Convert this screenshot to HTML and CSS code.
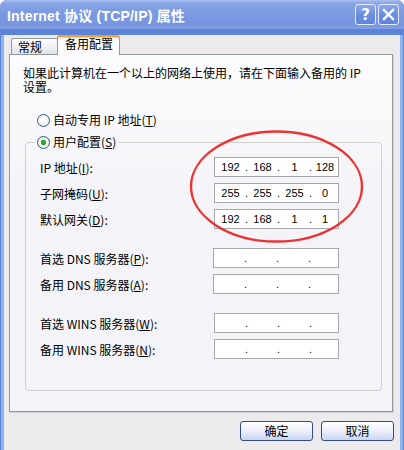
FILE: index.html
```html
<!DOCTYPE html>
<html lang="zh-CN">
<head>
  <meta charset="UTF-8">
  <title>Internet 协议 (TCP/IP) 属性</title>
  <link rel="stylesheet" href="styles.css">
</head>
<body>

  <div class="window">
    <div class="titlebar">
      <span class="title">Internet 协议 (TCP/IP) 属性</span>
      <div class="caption-btns">
        <span class="cap-btn help">?</span>
        <span class="cap-btn">
          <svg width="13" height="13" viewBox="0 0 13 13"><path d="M2 2 L11 11 M11 2 L2 11" stroke="#fff" stroke-width="2.4" stroke-linecap="square"/></svg>
        </span>
      </div>
    </div>

    <div class="frame">
      <div class="tabs">
        <div class="tab">常规</div>
        <div class="tab active">备用配置</div>
      </div>

      <div class="panel">
        <p class="intro">如果此计算机在一个以上的网络上使用，请在下面输入备用的 IP<br>设置。</p>

        <div class="radio-row">
          <span class="radio"></span>
          <span>自动专用 IP 地址(<u>T</u>)</span>
        </div>

        <fieldset class="group">
          <legend class="radio-row legend">
            <span class="radio checked"></span>
            <span>用户配置(<u>S</u>)</span>
          </legend>

          <div class="group-body">
            <div class="section">
              <div class="row">
                <span>IP 地址(<u>I</u>):</span>
                <div class="ip"><span class="seg">192</span><span class="dot">.</span><span class="seg">168</span><span class="dot">.</span><span class="seg">1</span><span class="dot">.</span><span class="seg last">128</span></div>
              </div>
              <div class="row">
                <span>子网掩码(<u>U</u>):</span>
                <div class="ip"><span class="seg">255</span><span class="dot">.</span><span class="seg">255</span><span class="dot">.</span><span class="seg">255</span><span class="dot">.</span><span class="seg last">0</span></div>
              </div>
              <div class="row">
                <span>默认网关(<u>D</u>):</span>
                <div class="ip"><span class="seg">192</span><span class="dot">.</span><span class="seg">168</span><span class="dot">.</span><span class="seg">1</span><span class="dot">.</span><span class="seg last">1</span></div>
              </div>
            </div>

            <div class="section">
              <div class="row">
                <span>首选 DNS 服务器(<u>P</u>):</span>
                <div class="ip shift"><span class="seg"></span><span class="dot">.</span><span class="seg"></span><span class="dot">.</span><span class="seg"></span><span class="dot">.</span><span class="seg last"></span></div>
              </div>
              <div class="row">
                <span>备用 DNS 服务器(<u>A</u>):</span>
                <div class="ip shift"><span class="seg"></span><span class="dot">.</span><span class="seg"></span><span class="dot">.</span><span class="seg"></span><span class="dot">.</span><span class="seg last"></span></div>
              </div>
            </div>

            <div class="section">
              <div class="row">
                <span>首选 WINS 服务器(<u>W</u>):</span>
                <div class="ip"><span class="seg"></span><span class="dot">.</span><span class="seg"></span><span class="dot">.</span><span class="seg"></span><span class="dot">.</span><span class="seg last"></span></div>
              </div>
              <div class="row">
                <span>备用 WINS 服务器(<u>N</u>):</span>
                <div class="ip"><span class="seg"></span><span class="dot">.</span><span class="seg"></span><span class="dot">.</span><span class="seg"></span><span class="dot">.</span><span class="seg last"></span></div>
              </div>
            </div>
          </div>
        </fieldset>
      </div>

      <div class="actions">
        <button class="btn">确定</button>
        <button class="btn">取消</button>
      </div>
    </div>

    <!-- red marker drawn over the address fields -->
    <svg class="marker" width="404" height="450" viewBox="0 0 404 450">
      <ellipse cx="276.5" cy="186.5" rx="85.5" ry="55" fill="none" stroke="#ea3434" stroke-width="2.4"/>
    </svg>
  </div>

</body>
</html>
```

FILE: styles.css
```css
body {
  margin: 0;
  background: #fff;
  font-family: "Noto Sans CJK SC", sans-serif;
  font-size: 12px;
  color: #000;
}

.window {
  position: relative;
  width: 404px;
  height: 450px;
  background: #5b84d8;
  border-radius: 7px 7px 0 0;
}

.titlebar {
  display: flex;
  align-items: center;
  justify-content: space-between;
  height: 29px;
  padding: 0 5px 0 7px;
  box-sizing: border-box;
  border-radius: 7px 7px 0 0;
  background: linear-gradient(#a8c0f0 0, #8aa6e6 3px, #7c9ae1 12px, #7896e0 24px, #7f9de3 29px);
}

.title {
  color: #fff;
  font-family: "Liberation Sans", "Noto Sans CJK SC", sans-serif;
  font-weight: bold;
  font-size: 14px;
  letter-spacing: 0.2px;
}

.caption-btns {
  display: flex;
  gap: 2px;
}

.cap-btn {
  display: flex;
  align-items: center;
  justify-content: center;
  width: 21px;
  height: 21px;
  box-sizing: border-box;
  border: 1px solid #e6ecfa;
  border-radius: 3px;
  background: linear-gradient(#8aa8ec, #6b8ee0 50%, #5f84dc);
  color: #fff;
}

.help {
  font-family: "DejaVu Sans", sans-serif;
  font-weight: bold;
  font-size: 15px;
}

.frame {
  height: 420px;
  margin: 0 1px 1px;
  box-sizing: border-box;
  border: 3px solid #8db2f0;
  border-top: 0;
  background: #eceaec;
}

.tabs {
  display: flex;
  align-items: flex-end;
  height: 19px;
  margin: 6px 0 0 7px;
}

.tab {
  height: 16px;
  width: 48px;
  box-sizing: border-box;
  padding-left: 6px;
  line-height: 15px;
  border: 1px solid #919b9c;
  border-bottom: 0;
  border-radius: 3px 3px 0 0;
  background: linear-gradient(#ffffff, #e0e3ec);
}

.tab.active {
  position: relative;
  width: 63px;
  height: 20px;
  margin: 0 0 -1px -2px;
  padding-left: 7px;
  line-height: 14px;
  border-top: 2px solid #eaa23a;
  box-shadow: inset 0 1px #ffd27a;
  background: #fcfcfe;
}

.panel {
  width: 384px;
  height: 358px;
  margin-left: 5px;
  box-sizing: border-box;
  padding: 11px 0 0 13px;
  border: 1px solid #919b9c;
  background: linear-gradient(#fcfcfe, #f4f4f8 40%);
  box-shadow: 1px 1px 0 #d2d0d8;
}

.intro {
  margin: 0;
  line-height: 14px;
  white-space: nowrap;
}

.radio-row {
  display: flex;
  align-items: center;
  height: 14px;
  line-height: 14px;
  margin: 19px 0 0 14px;
}

.radio {
  width: 13px;
  height: 13px;
  box-sizing: border-box;
  margin-right: 3px;
  border: 1px solid #2c5b8e;
  border-radius: 50%;
  background: radial-gradient(circle at 40% 40%, #ffffff 30%, #dcdcd6 100%);
}

.radio.checked {
  background: radial-gradient(circle, #2fb52f 0, #21a121 2.5px, #ffffff 3px, #dcdcd6 100%);
}

.group {
  margin: 8px 10px 0 2px;
  padding: 0;
  border: 1px solid #d0d0cc;
  border-radius: 4px;
}

.legend {
  margin: 0 0 0 9px;
  padding: 0 2px;
}

.group-body {
  padding: 5px 0 28px 14px;
}

.section + .section {
  margin-top: 13px;
}

.row {
  display: grid;
  grid-template-columns: 174px 125px;
  align-items: center;
  height: 26px;
}

.ip {
  display: flex;
  height: 20px;
  box-sizing: border-box;
  padding-left: 1px;
  border: 1px solid #a7a6aa;
  background: #fff;
  font-family: "Liberation Sans", sans-serif;
  font-size: 11px;
  line-height: 18px;
}

.ip.shift {
  margin-left: -1px;
}

.seg {
  width: 29px;
  text-align: center;
}

.seg.last {
  flex: 1;
}

.dot {
  width: 3px;
  text-align: center;
}

.actions {
  display: flex;
  justify-content: flex-end;
  gap: 8px;
  margin-top: 9px;
  padding-right: 6px;
}

.btn {
  width: 73px;
  height: 20px;
  padding: 0;
  border: 1px solid #2f4f86;
  border-radius: 3px;
  background: linear-gradient(#ffffff, #f0f2fa 45%, #c9d5f0);
  font-family: "Noto Sans CJK SC", sans-serif;
  font-size: 12px;
  line-height: 18px;
  color: #000;
}

.marker {
  position: absolute;
  left: 0;
  top: 0;
  pointer-events: none;
}
```
